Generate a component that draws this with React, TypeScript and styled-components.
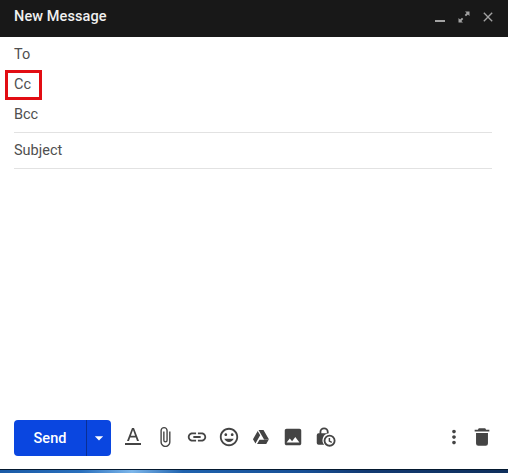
import React from "react";
import styled, { createGlobalStyle } from "styled-components";
import { MdAttachFile, MdClose, MdInsertLink, MdMoreVert, MdPhoto, MdArrowDropDown, MdInsertEmoticon } from "react-icons/md";

const Global = createGlobalStyle`
  html, body { margin: 0; padding: 0; background: #fff; }
  body { font-family: Roboto, "Liberation Sans", sans-serif; }
`;
const Page = styled.div`
  position: relative; width: 508px; height: 473px; display: flex; flex-direction: column; overflow: hidden; background: #fff;
`;
const Header = styled.header`
  height: 37px; background: #181818; display: flex; align-items: center; padding: 0 14px; flex: none;
`;
const Title = styled.div`
  flex: 1; color: #f0f0f0; font-size: 14.5px; font-weight: 500; padding-bottom: 5px; letter-spacing: 0.1px;
`;
const WindowIcons = styled.div`
  display: flex; align-items: center; gap: 8px; color: #a2a2a2; margin-right: -2px; padding-bottom: 3px;
`;
const Fields = styled.div`
  padding: 2px 16px 0 14px; display: flex; flex-direction: column;
`;
const Row = styled.div`
  position: relative; height: 30px; display: flex; align-items: center; color: #4f4f4f; font-size: 14.5px; flex: none;
`;
const LastRecipientRow = styled(Row)`
  height: 34px; padding-bottom: 3px; border-bottom: 1px solid #e2e2e2; box-sizing: border-box;
`;
const SubjectRow = styled(Row)`
  height: 36px; border-bottom: 1px solid #e2e2e2; box-sizing: border-box;
`;
const Highlight = styled.div`
  position: absolute; left: -9px; top: 1px; width: 37px; height: 30px; border: 3px solid #e20d13; box-sizing: border-box;
`;
const Spacer = styled.div`flex: 1;`;
const Footer = styled.footer`
  height: 49px; flex: none; display: flex; align-items: flex-start; padding: 0 12px 0 14px; color: #444;
`;
const SendGroup = styled.div`
  width: 97px; height: 36px; display: flex; border-radius: 4px; background: #0a46e0; color: #fff; overflow: hidden; flex: none;
`;
const SendLabel = styled.div`
  width: 72px; display: flex; align-items: center; justify-content: center; font-size: 14.5px; font-weight: 500;
`;
const SendArrow = styled.div`
  flex: 1; border-left: 1px solid #0a2f95; display: flex; align-items: center; justify-content: center;
`;
const Tools = styled.div<{ $gap: number }>`
  display: flex; align-items: center; height: 34px; margin-left: 8px; gap: ${p => p.$gap}px;
`;
const Tool = styled.div`
  width: 28px; height: 28px; display: flex; align-items: center; justify-content: center; color: #444;
`;
const Grow = styled.div`flex: 1;`;
const Strip = styled.div`
  height: 4px; flex: none; border-top: 1px solid #04192f; box-sizing: border-box;
  background: linear-gradient(90deg, #1a5aa6 0%, #2a70bd 16%, #7cb6ea 26%, #1f62ae 36%, #174f95 60%, #123a72 72%, #0f2f5c 100%);
`;

const Minimize = () => (
  <svg width="16" height="16" viewBox="0 0 16 16"><rect x="3" y="11" width="10" height="2" fill="currentColor" /></svg>
);
const Expand = () => (
  <svg width="16" height="16" viewBox="0 0 16 16"><path fill="currentColor" d="M9 2.500h4.500V7l-1.600-1.600-1.900 1.900-1.300-1.300 1.900-1.900zM7 13.500H2.500V9l1.600 1.600 1.900-1.900 1.300 1.300-1.900 1.900z" /></svg>
);
const TextColor = () => (
  <svg width="20" height="20" viewBox="0 0 20 20"><path fill="currentColor" fillRule="evenodd" d="M9 1h2l5 13h-2l-1.200-3.500H7.200L6 14H4zM7.900 8.700h4.200L10 3zM2 16h16v2H2z" /></svg>
);
const Drive = () => (
  <svg width="18" height="18" viewBox="0 0 24 24"><path fill="currentColor" d="M8.700 2.500h6.600l7.400 12.700h-6.600zM7.600 3.900l3.300 5.700L4.600 20.600 1.300 15zM10 15.700h12.200L19 21.400H6.700z" /></svg>
);
const LockClock = () => (
  <svg width="22" height="22" viewBox="0 0 24 24"><path fill="currentColor" fillRule="evenodd" d="M6 8V6.500a5 5 0 0 1 10 0V8h.2A7.500 7.500 0 0 0 11.200 20.500H5a2 2 0 0 1-2-2V10a2 2 0 0 1 2-2zM8 8h6V6.500a3 3 0 0 0-6 0z" /><path fill="currentColor" fillRule="evenodd" d="M17 9.500a6.500 6.500 0 1 1 0 13 6.500 6.500 0 0 1 0-13zm0 2a4.500 4.500 0 1 0 0 9 4.500 4.500 0 0 0 0-9zM16 13h1.600v3l2.200 1.300-.8 1.300-3-1.800z" /></svg>
);
const Trash = () => (
  <svg width="22" height="22" viewBox="0 0 24 24"><path fill="currentColor" d="M8.500 2.500h7L16.500 4H20v2H4V4h3.500zM5.500 7.500h13V19a2.500 2.500 0 0 1-2.500 2.500H8A2.500 2.500 0 0 1 5.500 19z" /></svg>
);

export default function App() {
  return (
    <Page>
      <Global />
      <Header>
        <Title>New Message</Title>
        <WindowIcons>
          <Minimize />
          <Expand />
          <MdClose size={16} />
        </WindowIcons>
      </Header>
      <Fields>
        <Row>To</Row>
        <Row><Highlight />Cc</Row>
        <LastRecipientRow>Bcc</LastRecipientRow>
        <SubjectRow>Subject</SubjectRow>
      </Fields>
      <Spacer />
      <Footer>
        <SendGroup>
          <SendLabel>Send</SendLabel>
          <SendArrow><MdArrowDropDown size={20} /></SendArrow>
        </SendGroup>
        <Tools $gap={4}>
          <Tool><TextColor /></Tool>
          <Tool><MdAttachFile size={22} /></Tool>
          <Tool><MdInsertLink size={22} /></Tool>
          <Tool><MdInsertEmoticon size={22} /></Tool>
          <Tool><Drive /></Tool>
          <Tool><MdPhoto size={22} /></Tool>
          <Tool><LockClock /></Tool>
        </Tools>
        <Grow />
        <Tools $gap={0}>
          <Tool><MdMoreVert size={22} /></Tool>
          <Tool><Trash /></Tool>
        </Tools>
      </Footer>
      <Strip />
    </Page>
  );
}
